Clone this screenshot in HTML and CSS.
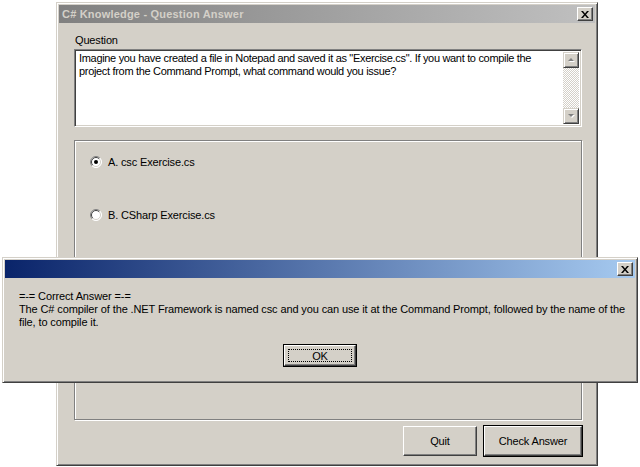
FILE: index.html
```html
<!DOCTYPE html>
<html lang="en">
<head>
    <meta charset="UTF-8">
    <title>C# Knowledge - Question Answer</title>
    <link rel="stylesheet" href="styles.css">
</head>
<body>

<div class="window main-window">
    <div class="titlebar inactive">
        <span class="title">C# Knowledge - Question Answer</span>
        <span class="close-btn">
            <svg width="8" height="7" viewBox="0 0 8 7"><path d="M0 0h2l2 2.4 2-2.4h2l-3 3.5 3 3.5h-2l-2-2.4-2 2.4h-2l3-3.5z" fill="#000"/></svg>
        </span>
    </div>
    <div class="main-body">
        <div class="label">Question</div>
        <div class="memo">
            <div class="memo-text">Imagine you have created a file in Notepad and saved it as "Exercise.cs". If you want to compile the project from the Command Prompt, what command would you issue?</div>
            <div class="vscroll">
                <span class="arrow-btn">
                    <svg width="7" height="5" viewBox="0 0 7 5"><path d="M1 4h6l-3-3z" fill="#fff"/><path d="M0 3h6l-3-3z" fill="#808080"/></svg>
                </span>
                <span class="track"></span>
                <span class="arrow-btn">
                    <svg width="7" height="5" viewBox="0 0 7 5"><path d="M1 1h6l-3 3z" fill="#fff"/><path d="M0 0h6l-3 3z" fill="#808080"/></svg>
                </span>
            </div>
        </div>
        <div class="group">
            <div class="option">
                <svg class="radio" width="12" height="12" viewBox="0 0 12 12">
                    <circle cx="6" cy="6" r="5.5" fill="#fff"/>
                    <path d="M2.1 9.9A5.5 5.5 0 0 1 9.9 2.1" stroke="#808080" fill="none"/>
                    <path d="M2.8 9.2A4.5 4.5 0 0 1 9.2 2.8" stroke="#404040" fill="none"/>
                    <path d="M9.9 2.1A5.5 5.5 0 0 1 2.1 9.9" stroke="#fff" fill="none"/>
                    <path d="M9.2 2.8A4.5 4.5 0 0 1 2.8 9.2" stroke="#d4d0c8" fill="none"/>
                    <circle cx="6" cy="6" r="2" fill="#000"/>
                </svg>
                <span>A. csc Exercise.cs</span>
            </div>
            <div class="option">
                <svg class="radio" width="12" height="12" viewBox="0 0 12 12">
                    <circle cx="6" cy="6" r="5.5" fill="#fff"/>
                    <path d="M2.1 9.9A5.5 5.5 0 0 1 9.9 2.1" stroke="#808080" fill="none"/>
                    <path d="M2.8 9.2A4.5 4.5 0 0 1 9.2 2.8" stroke="#404040" fill="none"/>
                    <path d="M9.9 2.1A5.5 5.5 0 0 1 2.1 9.9" stroke="#fff" fill="none"/>
                    <path d="M9.2 2.8A4.5 4.5 0 0 1 2.8 9.2" stroke="#d4d0c8" fill="none"/>
                </svg>
                <span>B. CSharp Exercise.cs</span>
            </div>
        </div>
        <div class="button-row">
            <button class="btn quit-btn">Quit</button>
            <button class="btn default check-btn">Check Answer</button>
        </div>
    </div>
</div>

<div class="window dialog">
    <div class="titlebar active">
        <span class="title"></span>
        <span class="close-btn">
            <svg width="8" height="7" viewBox="0 0 8 7"><path d="M0 0h2l2 2.4 2-2.4h2l-3 3.5 3 3.5h-2l-2-2.4-2 2.4h-2l3-3.5z" fill="#000"/></svg>
        </span>
    </div>
    <div class="dialog-body">
        <div class="message">
            =-= Correct Answer =-=<br>
            The C# compiler of the .NET Framework is named csc and you can use it at the Command Prompt, followed by the name of the file, to compile it.
        </div>
        <div class="dialog-buttons">
            <button class="btn default ok-btn"><span class="focus">OK</span></button>
        </div>
    </div>
</div>

</body>
</html>
```

FILE: styles.css
```css
body {
    margin: 0;
    width: 640px;
    height: 467px;
    overflow: hidden;
    position: relative;
    background: #fff;
    font-family: "Liberation Sans", Arial, sans-serif;
    font-size: 11px;
    letter-spacing: -0.15px;
    color: #000;
}

.window {
    position: absolute;
    box-sizing: border-box;
    background: #d4d0c8;
    border: 1px solid;
    border-color: #d4d0c8 #404040 #404040 #d4d0c8;
    box-shadow: inset 1px 1px 0 #fff, inset -1px -1px 0 #808080;
    padding: 2px;
    display: flex;
    flex-direction: column;
}

.main-window {
    left: 56px;
    top: 2px;
    width: 542px;
    height: 464px;
}

.dialog {
    left: 2px;
    top: 257px;
    width: 636px;
    height: 126px;
}

.titlebar {
    height: 18px;
    display: flex;
    align-items: center;
    justify-content: space-between;
    padding: 0 2px 0 3px;
    flex-shrink: 0;
}
.titlebar.inactive {
    background: linear-gradient(to right, #808080, #c0c0c0);
}
.titlebar.active {
    background: linear-gradient(to right, #0a246a, #a6caf0);
}
.title {
    font-weight: bold;
    font-size: 11px;
    letter-spacing: 0.2px;
    color: #d4d0c8;
}

.close-btn {
    width: 16px;
    height: 14px;
    box-sizing: border-box;
    background: #d4d0c8;
    border: 1px solid;
    border-color: #fff #404040 #404040 #fff;
    box-shadow: inset -1px -1px 0 #808080;
    display: flex;
    align-items: center;
    justify-content: center;
    padding-right: 1px;
}

.main-body {
    padding: 11px 13px 0 15px;
    display: flex;
    flex-direction: column;
}

.label {
    line-height: 13px;
    padding-left: 1px;
}

.memo {
    margin-top: 2px;
    height: 78px;
    box-sizing: border-box;
    border: 1px solid;
    border-color: #808080 #fff #fff #808080;
    box-shadow: inset 1px 1px 0 #404040, inset -1px -1px 0 #d4d0c8;
    background: #fff;
    padding: 2px;
    display: flex;
}
.memo-text {
    flex: 1;
    min-width: 0;
    line-height: 13px;
    letter-spacing: -0.32px;
    padding: 0 2px 0 2px;
}

.vscroll {
    width: 16px;
    flex-shrink: 0;
    display: flex;
    flex-direction: column;
}
.arrow-btn {
    height: 16px;
    box-sizing: border-box;
    background: #d4d0c8;
    border: 1px solid;
    border-color: #d4d0c8 #404040 #404040 #d4d0c8;
    box-shadow: inset 1px 1px 0 #fff, inset -1px -1px 0 #808080;
    display: flex;
    align-items: center;
    justify-content: center;
}
.track {
    flex: 1;
    background-image: conic-gradient(#fff 25%, #d4d0c8 0 50%, #fff 0 75%, #d4d0c8 0);
    background-size: 2px 2px;
}

.group {
    margin-top: 13px;
    height: 280px;
    box-sizing: border-box;
    border: 1px solid #808080;
    box-shadow: 1px 1px 0 #fff, inset 1px 1px 0 #fff;
    padding: 14px 0 0 15px;
    display: flex;
    flex-direction: column;
    gap: 40px;
}
.option {
    display: flex;
    align-items: center;
    gap: 6px;
    height: 13px;
}
.radio {
    flex-shrink: 0;
}

.button-row {
    margin-top: 6px;
    margin-right: -1px;
    display: flex;
    justify-content: flex-end;
    gap: 7px;
}

.btn {
    font: inherit;
    letter-spacing: inherit;
    color: #000;
    background: #d4d0c8;
    box-sizing: border-box;
    border: 1px solid;
    border-color: #fff #404040 #404040 #fff;
    box-shadow: inset -1px -1px 0 #808080;
    padding: 0;
    height: 30px;
}
.btn.default {
    outline: 1px solid #000;
    outline-offset: 0;
}
.quit-btn {
    width: 74px;
}
.check-btn {
    width: 98px;
    margin-right: 1px;
}

.dialog-body {
    padding: 12px 4px 0 14px;
    font-size: 11px;
    letter-spacing: -0.12px;
}
.message {
    line-height: 13px;
}
.dialog-buttons {
    margin-top: 16px;
    margin-right: 10px;
    display: flex;
    justify-content: center;
}
.ok-btn {
    width: 72px;
    height: 21px;
    display: flex;
    align-items: center;
    justify-content: center;
    padding: 3px;
}
.focus {
    flex: 1;
    align-self: stretch;
    border: 1px dotted #000;
    display: flex;
    align-items: center;
    justify-content: center;
}
```
